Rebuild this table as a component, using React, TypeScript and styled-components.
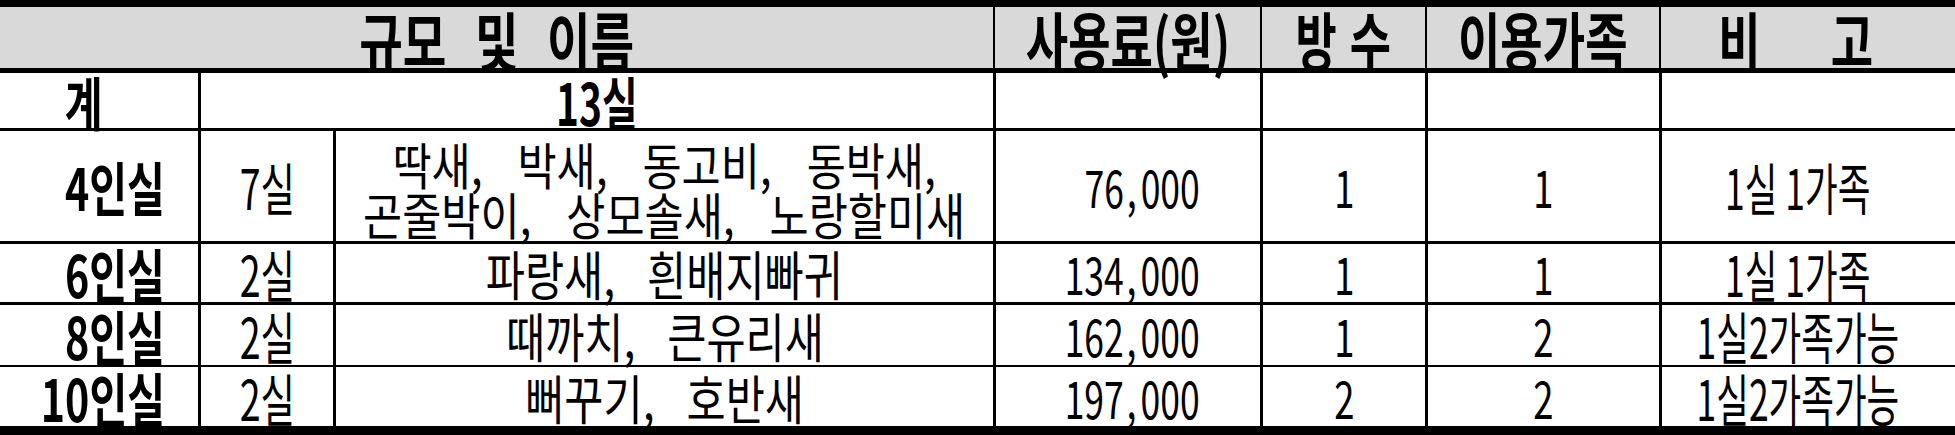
import React from "react";
import styled, { createGlobalStyle } from "styled-components";

const GlobalStyle = createGlobalStyle`
  html, body {
    margin: 0;
    padding: 0;
    background: #fff;
  }
  body {
    font-family: "Noto Sans CJK KR", "Noto Sans", sans-serif;
    color: #000;
  }
`;

const COLS = "198px 135px 660px 267px 165px 234px 1fr";

const Sheet = styled.div`
  width: 1955px;
  border-top: 7px solid #000;
  border-bottom: 9px solid #000;
`;

const Row = styled.div<{ $h: number; $rule: number; $head?: boolean }>`
  display: grid;
  grid-template-columns: ${COLS};
  height: ${(p) => p.$h}px;
  border-bottom: ${(p) => p.$rule}px solid #000;
  background: ${(p) => (p.$head ? "#d9d9d9" : "#fff")};
`;

const Cell = styled.div<{
  $span?: number;
  $first?: boolean;
  $thin?: boolean;
  $align?: "center" | "right";
  $pr?: number;
  $pt?: number;
}>`
  grid-column: span ${(p) => p.$span ?? 1};
  display: flex;
  align-items: center;
  justify-content: ${(p) => (p.$align === "right" ? "flex-end" : "center")};
  padding-right: ${(p) => p.$pr ?? 0}px;
  padding-top: ${(p) => p.$pt ?? 0}px;
  border-left: ${(p) => (p.$first ? "none" : `${p.$thin ? 2 : 3}px solid #000`)};
  min-width: 0;
  overflow: visible;
`;

// the source font is a tall condensed gothic, so glyphs are squeezed sideways
const Txt = styled.span<{
  $size?: number;
  $sx?: number;
  $bold?: boolean;
  $ws?: number;
  $lh?: number;
  $right?: boolean;
}>`
  display: inline-block;
  font-size: ${(p) => p.$size ?? 56}px;
  font-weight: ${(p) => (p.$bold ? 700 : 400)};
  line-height: ${(p) => p.$lh ?? 46}px;
  white-space: pre;
  text-align: center;
  word-spacing: ${(p) => p.$ws ?? 0}px;
  transform: scaleX(${(p) => p.$sx ?? 0.72});
  transform-origin: ${(p) => (p.$right ? "right center" : "center")};
`;

const HeadTxt = styled(Txt)`
  font-size: 64px;
  font-weight: 700;
  line-height: 60px;
`;

const Comma = styled.span`
  margin: 0 6px 0 4px;
`;

interface RoomRow {
  label: string;
  count: string;
  names: string;
  fee: string;
  rooms: string;
  families: string;
  note: string;
  h: number;
  rule: number;
}

const rows: RoomRow[] = [
  {
    label: "4인실",
    count: "7실",
    names: "딱새, 박새, 동고비, 동박새,\n곤줄박이, 상모솔새, 노랑할미새",
    fee: "76,000",
    rooms: "1",
    families: "1",
    note: "1실 1가족",
    h: 110,
    rule: 3,
  },
  {
    label: "6인실",
    count: "2실",
    names: "파랑새, 흰배지빠귀",
    fee: "134,000",
    rooms: "1",
    families: "1",
    note: "1실 1가족",
    h: 58,
    rule: 3,
  },
  {
    label: "8인실",
    count: "2실",
    names: "때까치, 큰유리새",
    fee: "162,000",
    rooms: "1",
    families: "2",
    note: "1실2가족가능",
    h: 60,
    rule: 2,
  },
  {
    label: "10인실",
    count: "2실",
    names: "뻐꾸기, 호반새",
    fee: "197,000",
    rooms: "2",
    families: "2",
    note: "1실2가족가능",
    h: 59,
    rule: 0,
  },
];

const Fee = ({ value }: { value: string }) => {
  const [head, tail] = value.split(",");
  return (
    <Txt $size={52} $sx={0.683} $right>
      {head}
      <Comma>,</Comma>
      {tail}
    </Txt>
  );
};

const Names = ({ text }: { text: string }) =>
  text.includes("\n") ? (
    <Txt $size={50} $sx={0.85} $ws={30} $lh={50}>
      {text}
    </Txt>
  ) : (
    <Txt $size={53} $sx={0.803} $ws={28}>
      {text}
    </Txt>
  );

export default function App() {
  return (
    <>
      <GlobalStyle />
      <Sheet>
        <Row $h={61} $rule={5} $head>
          <Cell $span={3} $first>
            <HeadTxt $sx={0.74} $ws={24}>규모 및 이름</HeadTxt>
          </Cell>
          <Cell $thin>
            <HeadTxt $sx={0.72}>사용료(원)</HeadTxt>
          </Cell>
          <Cell $thin>
            <HeadTxt $sx={0.7} $ws={4}>방 수</HeadTxt>
          </Cell>
          <Cell $thin>
            <HeadTxt $sx={0.72}>이용가족</HeadTxt>
          </Cell>
          <Cell $thin $pr={24}>
            <HeadTxt $sx={0.72} $ws={83}>비 고</HeadTxt>
          </Cell>
        </Row>

        <Row $h={55} $rule={3}>
          <Cell $first $pr={30}>
            <Txt $size={58} $bold $sx={0.71}>계</Txt>
          </Cell>
          <Cell $span={2}>
            <Txt $size={58} $bold $sx={0.67}>13실</Txt>
          </Cell>
          <Cell />
          <Cell />
          <Cell />
          <Cell />
        </Row>

        {rows.map((r) => (
          <Row key={r.label} $h={r.h} $rule={r.rule}>
            <Cell $first $align="right" $pr={33}>
              <Txt $size={58} $bold $sx={0.71} $right>
                {r.label}
              </Txt>
            </Cell>
            <Cell>
              <Txt $sx={0.67}>{r.count}</Txt>
            </Cell>
            <Cell $pt={r.names.includes("\n") ? 4 : 0}>
              <Names text={r.names} />
            </Cell>
            <Cell $align="right" $pr={60}>
              <Fee value={r.fee} />
            </Cell>
            <Cell>
              <Txt $size={52} $sx={0.7}>{r.rooms}</Txt>
            </Cell>
            <Cell>
              <Txt $size={52} $sx={0.7}>{r.families}</Txt>
            </Cell>
            <Cell $pr={22}>
              <Txt $sx={r.note.length > 5 ? 0.634 : 0.66}>{r.note}</Txt>
            </Cell>
          </Row>
        ))}
      </Sheet>
    </>
  );
}
